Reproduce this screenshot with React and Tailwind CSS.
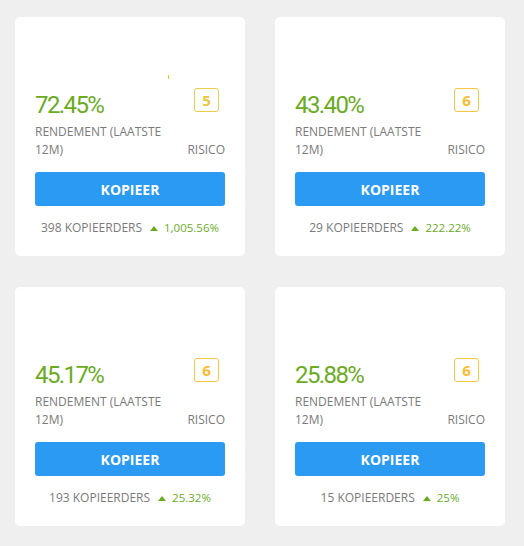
const cards = [
  { pct: "72.45%", risk: 5, copiers: 398, change: "1,005.56%", tick: true },
  { pct: "43.40%", risk: 6, copiers: 29, change: "222.22%" },
  { pct: "45.17%", risk: 6, copiers: 193, change: "25.32%" },
  { pct: "25.88%", risk: 6, copiers: 15, change: "25%" },
];

const Card = ({ pct, risk, copiers, change, tick }) => (
  <div className="bg-white rounded-[5px] h-[239px] px-5 flex flex-col">
    {/* leftover sparkline area */}
    <div className="h-[73px] relative">
      {tick && <div className="absolute left-[133px] top-[58px] w-px h-[4px] bg-[#f2c811]" />}
    </div>
    <div className="flex items-start justify-between">
      <div className="text-[24px] leading-[30px] text-[#6bab1f] tracking-[-1.6px] font-['Roboto',sans-serif]">
        {pct}
      </div>
      <div
        className={`w-[25px] h-[24px] mt-[-2px] mr-[6px] rounded-[3px] border flex items-center justify-center text-[15px] font-bold font-['Open_Sans',sans-serif] ${
          risk === 5 ? "border-[#ebcd4a] text-[#e8c73a]" : "border-[#fbc443] text-[#f9bd35]"
        }`}
      >
        {risk}
      </div>
    </div>
    <div className="flex items-end justify-between mt-[3px] text-[12px] leading-[18px] text-[#7a7a7a] font-['Open_Sans',sans-serif]">
      <div>
        RENDEMENT (LAATSTE
        <br />
        12M)
      </div>
      <div>RISICO</div>
    </div>
    <button className="mt-[13px] h-[34px] w-full rounded-[3px] bg-[#2b9af3] text-white text-[14px] font-bold font-['Open_Sans',sans-serif]">
      KOPIEER
    </button>
    <div className="mt-[13px] flex items-center justify-center gap-[8px] text-[12px] font-['Open_Sans',sans-serif]">
      <span className="text-[#7a7a7a]">{copiers} KOPIEERDERS</span>
      <span className="flex items-center gap-[6px] text-[#6bab1f] text-[11.5px]">
        <svg width="8" height="5" viewBox="0 0 8 5">
          <path d="M4 0L8 5H0z" fill="#6bab1f" />
        </svg>
        {change}
      </span>
    </div>
  </div>
);

export default function App() {
  return (
    <div className="w-[524px] h-[546px] bg-[#efefef] pt-[17px] pl-[15px] pr-[19px]">
      <div className="grid grid-cols-[230px_230px] gap-x-[30px] gap-y-[31px]">
        {cards.map((c, i) => (
          <Card key={i} {...c} />
        ))}
      </div>
    </div>
  );
}
